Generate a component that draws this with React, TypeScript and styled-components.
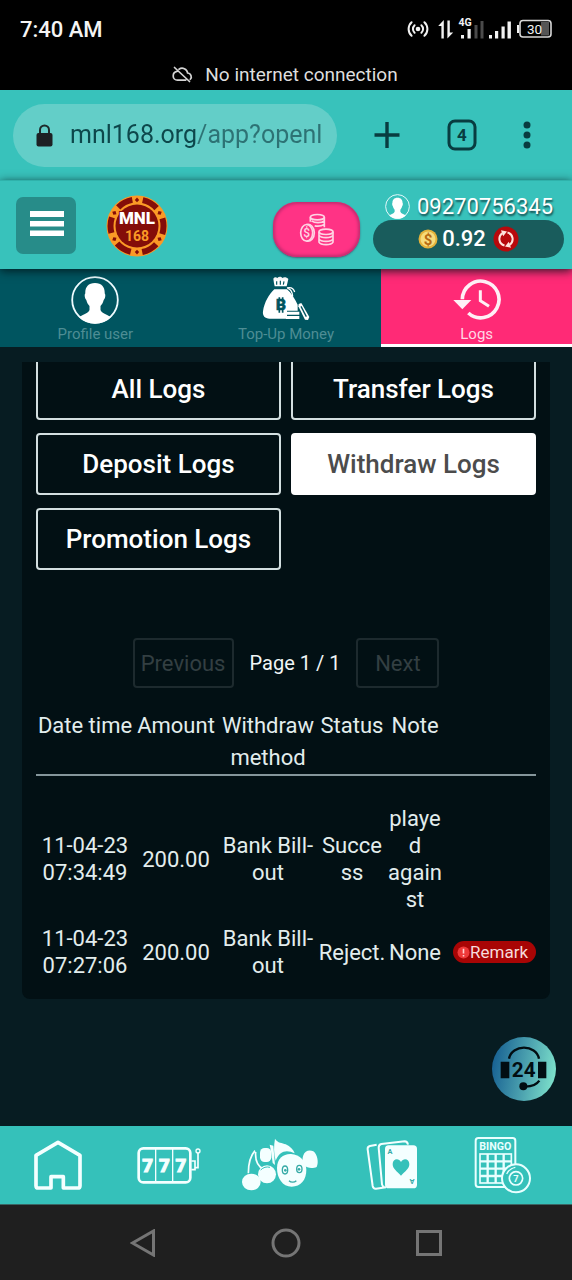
import React from "react";
import styled, { createGlobalStyle } from "styled-components";

const GlobalStyle = createGlobalStyle`
  *, *::before, *::after { box-sizing: border-box; }
  body { margin: 0; background: #071c22; font-family: Roboto, "Noto Sans", sans-serif; }
  button, input, table { font-family: inherit; }
  svg { display: block; flex: none; }
`;

const Page = styled.div`
  display: flex;
  flex-direction: column;
  min-height: 100vh;
`;

/* ---------- phone status area ---------- */
const StatusArea = styled.div`
  background: #000;
  color: #f4f4f4;
`;
const StatusBar = styled.div`
  display: flex;
  justify-content: space-between;
  align-items: center;
  height: 58px;
  padding: 0 20px;
  font-size: 22px;
  font-weight: 500;
`;
const OfflineNotice = styled.div`
  display: flex;
  justify-content: center;
  align-items: center;
  gap: 12px;
  height: 32px;
  padding-right: 2px;
  color: #dedede;
  font-size: 19px;
`;

/* ---------- browser bar ---------- */
const BrowserBar = styled.div`
  display: flex;
  align-items: center;
  height: 90px;
  padding: 0 41px 0 13px;
  background: #38c2bb;
`;
const AddressBox = styled.label`
  display: flex;
  align-items: center;
  gap: 17px;
  flex: 1;
  min-width: 0;
  height: 63px;
  padding: 0 10px 0 23px;
  border-radius: 32px;
  background: #63cec8;
`;
const AddressInput = styled.input`
  flex: 1;
  min-width: 0;
  padding: 0;
  border: 0;
  outline: 0;
  font-size: 25px;
  line-height: 36px;
  color: #0d474b;
  background: linear-gradient(to right, #0d474b 127px, #2d7274 127px);
  background-clip: text;
  -webkit-text-fill-color: transparent;
`;
const BrowserActions = styled.div`
  display: flex;
  align-items: center;
  justify-content: space-between;
  width: 157px;
  margin-left: 37px;
`;
const IconButton = styled.button`
  display: flex;
  padding: 0;
  border: 0;
  background: none;
  color: #083c40;
`;

/* ---------- site header ---------- */
const Header = styled.header`
  position: relative;
  z-index: 1;
  display: flex;
  align-items: center;
  height: 89px;
  padding: 13px 8px 12px 16px;
  background: #38c2bb;
  border-top: 1px solid #2fb2ab;
  box-shadow: 0 2px 9px rgba(0, 20, 24, 0.85);
`;
const MenuButton = styled.button`
  display: flex;
  align-items: center;
  justify-content: center;
  width: 60px;
  height: 57px;
  padding: 0 0 4px 2px;
  border: 0;
  border-radius: 7px;
  background: #278c89;
`;
const LogoLink = styled.a`
  margin-left: 30px;
  margin-right: auto;
`;
const CoinsButton = styled.button`
  display: flex;
  align-items: center;
  justify-content: center;
  align-self: flex-end;
  width: 87px;
  height: 55px;
  padding: 0;
  border: 0;
  border-radius: 24px;
  background: #ff3385;
  box-shadow: inset 0 0 3px 2px #c52c70, 0 1px 2px rgba(80, 30, 70, 0.6);
`;
const Account = styled.div`
  width: 191px;
  margin-left: 13px;
`;
const PhoneRow = styled.div`
  display: flex;
  align-items: center;
  gap: 7px;
  height: 26px;
  padding-left: 12px;
  color: #fff;
  font-size: 22px;
  text-shadow: 1px 2px 2px #134e50;
`;
const Balance = styled.div`
  display: flex;
  align-items: center;
  justify-content: center;
  gap: 4px;
  height: 38px;
  border-radius: 19px;
  background: #195c5c;
  color: #fff;
  font-size: 22px;
  font-weight: 500;
`;
const RefreshButton = styled.button`
  display: flex;
  margin-left: 3px;
  padding: 0;
  border: 0;
  border-radius: 50%;
  background: none;
`;

/* ---------- tabs ---------- */
const Tabs = styled.nav`
  display: grid;
  grid-template-columns: repeat(3, 1fr);
  height: 78px;
`;
const Tab = styled.a<{ $active?: boolean }>`
  display: flex;
  flex-direction: column;
  align-items: center;
  padding-top: 7px;
  border-bottom: 3px solid ${(p) => (p.$active ? "#fff" : "#005560")};
  background: ${(p) => (p.$active ? "#ff2a76" : "#005560")};
  color: ${(p) => (p.$active ? "#ffd7e5" : "#4e8d94")};
  font-size: 15px;
  line-height: 18px;
  text-decoration: none;
  svg { margin-bottom: 1px; }
`;

/* ---------- logs ---------- */
const Main = styled.main`
  position: relative;
  flex: 1;
  padding: 15px 22px 127px;
  background: #071c22;
`;
const Panel = styled.section`
  overflow: hidden;
  padding: 0 14px 20px;
  border-radius: 0 0 8px 8px;
  background: #021014;
`;
const FilterGrid = styled.div`
  display: grid;
  grid-template-columns: 1fr 1fr;
  gap: 13px 10px;
  margin-top: -4px;
`;
const FilterButton = styled.button<{ $active?: boolean }>`
  height: 62px;
  padding: 0;
  border: 2px solid ${(p) => (p.$active ? "#fff" : "#d3dfe0")};
  border-radius: 4px;
  background: ${(p) => (p.$active ? "#fff" : "transparent")};
  color: ${(p) => (p.$active ? "#4c4c4c" : "#fff")};
  font-size: 26px;
  font-weight: 500;
`;
const Pager = styled.div`
  display: flex;
  justify-content: center;
  align-items: center;
  gap: 16px;
  margin-top: 68px;
  color: #f1f6f6;
  font-size: 20px;
`;
const PagerButton = styled.button<{ $width: number }>`
  width: ${(p) => p.$width}px;
  height: 50px;
  padding: 0;
  border: 2px solid #1d2a2e;
  border-radius: 4px;
  background: transparent;
  color: #333f42;
  font-size: 22px;
`;
const LogTable = styled.table`
  width: 100%;
  margin-top: 22px;
  table-layout: fixed;
  border-collapse: collapse;
  color: #e2eded;
  font-size: 22px;
  text-align: center;
`;
const HeadCell = styled.th`
  height: 64px;
  padding: 0;
  border-bottom: 2px solid #85969b;
  font-weight: 400;
  line-height: 32px;
  vertical-align: top;
`;
const Cell = styled.td<{ $first?: boolean }>`
  padding: ${(p) => (p.$first ? "29px" : "12px")} 0 0;
  line-height: 27px;
  overflow-wrap: anywhere;
`;
const RemarkButton = styled.button`
  display: flex;
  align-items: center;
  justify-content: center;
  width: 83px;
  height: 22px;
  margin-left: auto;
  padding: 0 4px 0 0;
  border: 0;
  border-radius: 11px;
  background: #a80505;
  color: #f6dcdc;
  font-size: 17px;
`;
const SupportButton = styled.button`
  position: absolute;
  right: 16px;
  bottom: 25px;
  padding: 0;
  border: 0;
  border-radius: 50%;
  background: linear-gradient(100deg, #1a6494 8%, #4fa6b1 55%, #7fe3cc 95%);
`;

/* ---------- bottom bars ---------- */
const GameNav = styled.nav`
  display: grid;
  grid-template-columns: repeat(5, 1fr);
  height: 78px;
  padding: 0 13px 0 2px;
  background: #35c1ba;
`;
const GameLink = styled.a`
  display: flex;
  align-items: center;
  justify-content: center;
`;
const SystemNav = styled.div`
  display: grid;
  grid-template-columns: repeat(3, 1fr);
  height: 76px;
  padding: 0 12.5%;
  border-top: 1px solid #3a6664;
  background: #1f1f1f;
`;
const SystemButton = styled.button`
  display: flex;
  align-items: center;
  justify-content: center;
  padding: 0;
  border: 0;
  background: none;
`;

/* ---------- drawings ---------- */
const StatusIcons = () => (
  <svg width="146" height="30" viewBox="406 14 146 30" fill="#f2f2f2" aria-hidden="true">
    <circle cx="418" cy="29" r="2.3" />
    <g fill="none" stroke="#f2f2f2" strokeWidth="2" strokeLinecap="round">
      <path d="M414.6 25.2a5.2 5.2 0 0 0 0 7.6M421.4 25.2a5.2 5.2 0 0 1 0 7.6M411.6 22.2a9.2 9.2 0 0 0 0 13.6M424.4 22.2a9.2 9.2 0 0 1 0 13.6" />
    </g>
    <path d="M441.400 38.500V26h-3.200l5.600-6v18.500zM447.400 20.500h2.400V32.500h3.400l-5.800 6z" />
    <text x="458.500" y="25.500" fontSize="10.500" fontWeight="700">4G</text>
    <path d="M461 35h3v3.500h-3zM467.500 29h3.200v9.500h-3.200zM489 35h3v3.500h-3zM495 31h3.200v7.500H495zM501.500 26.500h3.200v12h-3.200zM507.500 21.500h3.400v17h-3.400z" />
    <path d="M474.500 25h3v13.500h-3zM480.500 21h3v17.500h-3z" fill="#4a4a4a" />
    <rect x="541" y="22" width="8" height="13.500" fill="#555" />
    <rect x="520" y="20.500" width="31" height="16.500" rx="3" fill="none" stroke="#d8d8d8" strokeWidth="1.600" />
    <path d="M517 25h2v8h-2z" />
    <text x="527" y="33.500" fontSize="13.500" fontWeight="400">30</text>
  </svg>
);
const CloudOff = () => (
  <svg width="21" height="17" viewBox="0 0 21 17" fill="none" stroke="#d4d4d4" strokeWidth="1.700" strokeLinecap="round" aria-hidden="true">
    <path d="M7 3.200A5.500 5.500 0 0 1 15.600 7a3.800 3.800 0 0 1 2.700 6.300M4.900 5.400C2.600 5.900 1.200 7.600 1.200 9.900a4.200 4.200 0 0 0 4.200 4.200h8.300M2.500 1.500l15 14" />
  </svg>
);
const Lock = () => (
  <svg width="17" height="23" viewBox="0 0 17 23" aria-hidden="true">
    <path d="M4 10V6a4.500 4.500 0 0 1 9 0v4" fill="none" stroke="#1d2a2b" strokeWidth="2" />
    <rect x="0.500" y="9" width="16" height="13.500" rx="2" fill="#1d2124" />
  </svg>
);
const Plus = () => (
  <svg width="26" height="28" viewBox="0 0 26 28" stroke="currentColor" strokeWidth="3.400" aria-hidden="true">
    <path d="M13 1v26M0.500 14h25" />
  </svg>
);
const TabCount = () => (
  <svg width="30" height="32" viewBox="0 0 30 32" aria-hidden="true">
    <rect x="2" y="2" width="26" height="28" rx="6" fill="none" stroke="currentColor" strokeWidth="3" />
    <text x="15" y="22" fontSize="17" fontWeight="700" textAnchor="middle" fill="currentColor">4</text>
  </svg>
);
const Dots = () => (
  <svg width="8" height="28" viewBox="0 0 8 28" fill="currentColor" aria-hidden="true">
    <circle cx="4" cy="4" r="3.500" /><circle cx="4" cy="14" r="3.500" /><circle cx="4" cy="24" r="3.500" />
  </svg>
);
const MenuBars = () => (
  <svg width="34" height="26" viewBox="0 0 34 26" fill="#fff" aria-hidden="true">
    <path d="M0 0h34v6H0zM0 10h34v5.500H0zM0 19.500h34V25H0z" />
  </svg>
);
const ChipLogo = () => (
  <svg width="62" height="62" viewBox="0 0 62 62" aria-hidden="true">
    <circle cx="31" cy="31" r="30.500" fill="#fb9a26" />
    <circle cx="31" cy="31" r="26.500" fill="none" stroke="#840d09" strokeWidth="6" strokeDasharray="16 11.750" strokeDashoffset="-5.870" transform="rotate(-90 31 31)" />
    {[0, 60, 120, 180, 240, 300].map((a) => (
      <path key={a} d="M31 2.500l2.200 2.400-2.200 2.400-2.200-2.400z" fill="#840d09" transform={`rotate(${a} 31 31)`} />
    ))}
    <circle cx="31" cy="31" r="21.500" fill="#840d09" />
    <text x="31" y="29" fontSize="17" fontWeight="900" textAnchor="middle" fill="#fff" stroke="#840d09" strokeWidth="2" paintOrder="stroke">MNL</text>
    <text x="31" y="46" fontSize="14" fontWeight="700" textAnchor="middle" fill="#fb9a26">168</text>
  </svg>
);
const Coins = () => (
  <svg width="36" height="34" viewBox="89 100 108 99" fill="none" stroke="#ffd3e3" strokeWidth="5" aria-hidden="true">
    <ellipse cx="144" cy="111" rx="21" ry="8" />
    <path d="M123 111v14M165 111v30M127 122c9 7 29 7 38 0M136 137c9 2 20 1 29-4" />
    <ellipse cx="112" cy="158" rx="18" ry="25" />
    <path d="M112 133c12-3 23 9 23 25s-10 27-23 25" />
    <text x="112" y="171" fontSize="36" fontWeight="500" textAnchor="middle" fill="#ffd3e3" stroke="none">$</text>
    <ellipse cx="170" cy="155" rx="21" ry="8" />
    <path d="M149 155v31c5 10 37 10 42 0v-31M149 165c5 10 37 10 42 0M149 176c5 10 37 10 42 0" />
  </svg>
);
const Avatar = ({ size }: { size: number }) => (
  <svg width={size} height={size} viewBox="0 0 48 48" aria-hidden="true">
    <circle cx="24" cy="24" r="22.800" fill="none" stroke="#eefcff" strokeWidth="1.800" />
    <path d="M24 7c-7 0-10 4.500-9.700 10.500-1 .6-.8 4.500 1 6.500.6 2.700 1.800 4.500 3.200 6v4c-1.500 3.500-6 4.300-10.500 7.200A23 23 0 0 0 40 41.200c-4.500-2.900-9-3.700-10.500-7.200v-4c1.400-1.500 2.600-3.300 3.200-6 1.800-2 2-5.900 1-6.500C34 11.500 31 7 24 7z" fill="#fff" />
  </svg>
);
const GoldCoin = () => (
  <svg width="20" height="20" viewBox="0 0 20 20" aria-hidden="true">
    <circle cx="10" cy="10" r="9.500" fill="#e3b23b" />
    <circle cx="10" cy="10" r="7.500" fill="#f5dc7c" />
    <text x="10" y="15.500" fontSize="15" fontWeight="700" textAnchor="middle" fill="#b76a12">$</text>
  </svg>
);
const Refresh = () => (
  <svg width="26" height="26" viewBox="0 0 26 26" aria-hidden="true">
    <circle cx="13" cy="13" r="12.500" fill="#b8090c" />
    <g fill="none" stroke="#ffe3dc" strokeWidth="2">
      <path d="M11.500 19.500A6.800 6.800 0 0 1 9.500 7.200M14.500 6.500a6.800 6.800 0 0 1 2 12.300" />
    </g>
    <path d="M8 4.300l6 1.200-3.800 4.700zM18 21.700l-6-1.200 3.800-4.700z" fill="#ffe3dc" />
  </svg>
);
const MoneyBag = () => (
  <svg width="48" height="48" viewBox="78 12 144 144" fill="#fff" aria-hidden="true">
    <path d="M112 20c4-6 9-5 12-2 4-5 12-5 15 0 5-4 14-2 18 3l-5 22h-36c-2-8-3-15-4-23z" />
    <path d="M115 52h38c14 12 24 30 32 46v18h-32v24h-52c-14 0-22-8-20-22 4-28 18-50 34-66z" />
    <path d="M153 48c12-3 20 2 23 12M156 49c10 4 13 10 14 24" fill="none" stroke="#fff" strokeWidth="4" />
    <path d="M150 119h40v9h-40zM150 132h40v9h-40z" />
    <path d="M188 96l8-3 24 42-4 9-9-1-20-40z" />
    <path d="M195 103l16 31" stroke="#005560" strokeWidth="4" />
    <path d="M122 28v10M133 26v12M144 28l-2 10" stroke="#005560" strokeWidth="3.500" />
    <text x="135" y="114" fontSize="46" fontWeight="900" textAnchor="middle" fill="#005560" stroke="#005560" strokeWidth="2">B</text>
    <path d="M130 83v-7M140 83v-7M130 122v-9M140 122v-9" stroke="#005560" strokeWidth="5" />
  </svg>
);
const History = () => (
  <svg width="48" height="48" viewBox="548 286 144 144" aria-hidden="true">
    <path d="M576 356a55 55 0 1 1 18 41" fill="none" stroke="#fff0f6" strokeWidth="11" />
    <path d="M549 358h54l-27 28z" fill="#fff0f6" />
    <path d="M630 329v31l26 17" fill="none" stroke="#fff0f6" strokeWidth="9" />
  </svg>
);
const Alert = () => (
  <svg width="13" height="13" viewBox="0 0 13 13" aria-hidden="true">
    <circle cx="6.500" cy="6.500" r="6" fill="#ee3a3a" />
    <path d="M6.500 2.800v4.700M6.500 9v1.500" stroke="#ffd0d0" strokeWidth="1.600" />
  </svg>
);
const Headset24 = () => (
  <svg width="64" height="64" viewBox="637 51 192 192" aria-hidden="true">
    <path d="M688 116c8-44 82-44 90 0M779 182c-8 12-20 17-42 18" fill="none" stroke="#020d12" strokeWidth="7" />
    <path d="M663 125h26v50h-26zM775 125h25v50h-25z" fill="#020d12" />
    <circle cx="731" cy="199" r="12" fill="#020d12" />
    <text x="732" y="170" fontSize="62" fontWeight="700" textAnchor="middle" fill="#020d12">24</text>
  </svg>
);
const House = () => (
  <svg width="50" height="52" viewBox="99 56 150 156" aria-hidden="true">
    <path d="M174 66l66 39v91q0 7-7 7h-43v-34h-37v34h-38q-7 0-7-7v-91z" fill="none" stroke="#f4ffff" strokeWidth="11" strokeLinejoin="round" />
  </svg>
);
const Slots = () => (
  <svg width="64" height="38" viewBox="411 76 192 114" fill="none" stroke="#f4ffff" aria-hidden="true">
    <rect x="416" y="83" width="155" height="102" rx="14" strokeWidth="8" />
    <path d="M467 84v100M518 84v100" strokeWidth="4" />
    <path d="M574 121h11v26h-11M594 97v44h-8" strokeWidth="5" />
    <circle cx="594" cy="91" r="6" strokeWidth="4" />
    <g fill="#f4ffff" strokeWidth="3" fontSize="56" fontWeight="900" textAnchor="middle">
      <text x="443" y="155">7</text><text x="493" y="155">7</text><text x="543" y="155">7</text>
    </g>
  </svg>
);
const FishFruit = () => (
  <svg width="78" height="54" viewBox="34 22 234 162" fill="#f4ffff" aria-hidden="true">
    <path d="M56 128c0-30 4-50 20-68M78 64c-2 26 8 44 24 52" fill="none" stroke="#f4ffff" strokeWidth="5" />
    <ellipse cx="65" cy="154" rx="28" ry="25" />
    <circle cx="112" cy="131" r="27" />
    <path d="M93 118c8-8 17-11 28-8" fill="none" stroke="#35c1ba" strokeWidth="3" />
    <rect x="91" y="52" width="34" height="42" rx="14" />
    <path d="M120 42l11 3 5 58-7-6-5-36z" />
    <path d="M136 24c8 14 22 12 32 17 14 7 23 16 27 27-24-12-45-8-57 22-6-22-6-44-2-66z" />
    <path d="M142 112c0-28 19-43 42-42 27 2 46 22 46 48 0 30-17 50-44 50-28 0-44-26-44-56z" />
    <path d="M221 74c4-14 18-17 30-12 12 8 17 34 10 47-10 5-29 5-37-5-6-8-7-20-3-30z" />
    <g fill="none" stroke="#35aaa6" strokeWidth="4">
      <ellipse cx="166" cy="118" rx="8" ry="12" /><ellipse cx="209" cy="115" rx="8" ry="11" />
      <path d="M178 150c6 6 16 6 22 0" />
    </g>
    <circle cx="167" cy="119" r="4" fill="#35aaa6" /><circle cx="208" cy="116" r="4" fill="#35aaa6" />
  </svg>
);
const Cards = () => (
  <svg width="52" height="50" viewBox="258 367 156 150" aria-hidden="true">
    <g fill="none" stroke="#f4ffff" strokeWidth="6">
      <path d="M290 381l-20 4q-8 2-7 10l15 110q2 9 10 8l30-4" />
      <path d="M313 508q-6-2-7-8l-10-110q0-9 8-11l70-8q8 0 10 10" />
    </g>
    <rect x="315" y="383" width="96" height="129" rx="11" fill="#f4ffff" />
    <path d="M363 474c-13-14-25-21-25-35 0-16 18-20 25-6 7-14 25-10 25 6 0 14-12 21-25 35z" fill="#35c1ba" />
    <g fill="#35aaa6" fontSize="22" fontWeight="700" textAnchor="middle">
      <text x="330" y="408">A</text>
      <text x="396" y="500" transform="rotate(180 396 492)">A</text>
    </g>
  </svg>
);
const Bingo = () => (
  <svg width="58" height="58" viewBox="582 354 174 174" fill="none" stroke="#e9ffff" aria-hidden="true">
    <rect x="587" y="360" width="119" height="147" rx="8" strokeWidth="6" />
    <text x="646" y="396" fontSize="32" fontWeight="700" textAnchor="middle" fill="#e9ffff" stroke="none">BINGO</text>
    <rect x="600" y="408" width="94" height="87" strokeWidth="5" />
    <path d="M623 408v87M647 408v87M671 408v87M600 430h94M600 452h94M600 474h94" strokeWidth="7" />
    <circle cx="708" cy="481" r="42" fill="#35c1ba" strokeWidth="6" />
    <circle cx="708" cy="481" r="20" strokeWidth="5" />
    <path d="M680 468c6-12 14-18 26-20" strokeWidth="4" />
    <text x="708" y="492" fontSize="28" fontWeight="700" textAnchor="middle" fill="#e9ffff" stroke="none">7</text>
  </svg>
);

const filters = ["All Logs", "Transfer Logs", "Deposit Logs", "Withdraw Logs", "Promotion Logs"];
const headings = ["Date time", "Amount", "Withdraw method", "Status", "Note", ""];
const columnWidths = [98, 84, 100, 68, 58];
const logs = [
  { date: "11-04-23", time: "07:34:49", amount: "200.00", method: "Bank Bill-out", status: "Success", note: "played against", remark: false },
  { date: "11-04-23", time: "07:27:06", amount: "200.00", method: "Bank Bill-out", status: "Reject.", note: "None", remark: true },
];
const games = [
  { label: "Home", Icon: House },
  { label: "Slots", Icon: Slots },
  { label: "Fishing", Icon: FishFruit },
  { label: "Cards", Icon: Cards },
  { label: "Bingo", Icon: Bingo },
];

export default function App() {
  return (
    <Page>
      <GlobalStyle />
      <StatusArea>
        <StatusBar>
          <span>7:40 AM</span>
          <StatusIcons />
        </StatusBar>
        <OfflineNotice>
          <CloudOff />
          <span>No internet connection</span>
        </OfflineNotice>
      </StatusArea>

      <BrowserBar>
        <AddressBox>
          <Lock />
          <AddressInput type="text" aria-label="Address" defaultValue="mnl168.org/app?openl" />
        </AddressBox>
        <BrowserActions>
          <IconButton aria-label="New tab"><Plus /></IconButton>
          <IconButton aria-label="Open tabs"><TabCount /></IconButton>
          <IconButton aria-label="More"><Dots /></IconButton>
        </BrowserActions>
      </BrowserBar>

      <Header>
        <MenuButton aria-label="Menu"><MenuBars /></MenuButton>
        <LogoLink href="#" aria-label="MNL168"><ChipLogo /></LogoLink>
        <CoinsButton aria-label="Top up"><Coins /></CoinsButton>
        <Account>
          <PhoneRow>
            <Avatar size={25} />
            <span>09270756345</span>
          </PhoneRow>
          <Balance>
            <GoldCoin />
            <span>0.92</span>
            <RefreshButton aria-label="Refresh balance"><Refresh /></RefreshButton>
          </Balance>
        </Account>
      </Header>

      <Tabs>
        <Tab href="#profile"><Avatar size={48} />Profile user</Tab>
        <Tab href="#topup"><MoneyBag />Top-Up Money</Tab>
        <Tab href="#logs" $active><History />Logs</Tab>
      </Tabs>

      <Main>
        <Panel>
          <FilterGrid>
            {filters.map((name) => (
              <FilterButton key={name} $active={name === "Withdraw Logs"}>{name}</FilterButton>
            ))}
          </FilterGrid>
          <Pager>
            <PagerButton $width={101} disabled>Previous</PagerButton>
            <span>Page 1 / 1</span>
            <PagerButton $width={83} disabled>Next</PagerButton>
          </Pager>
          <LogTable>
            <colgroup>
              {columnWidths.map((w, i) => <col key={i} width={w} />)}
              <col />
            </colgroup>
            <thead>
              <tr>{headings.map((h) => <HeadCell key={h}>{h}</HeadCell>)}</tr>
            </thead>
            <tbody>
              {logs.map((log, i) => (
                <tr key={log.time}>
                  <Cell $first={i === 0}>{log.date} {log.time}</Cell>
                  <Cell $first={i === 0}>{log.amount}</Cell>
                  <Cell $first={i === 0}>{log.method}</Cell>
                  <Cell $first={i === 0}>{log.status}</Cell>
                  <Cell $first={i === 0}>{log.note}</Cell>
                  <Cell $first={i === 0}>
                    {log.remark && <RemarkButton><Alert />Remark</RemarkButton>}
                  </Cell>
                </tr>
              ))}
            </tbody>
          </LogTable>
        </Panel>
        <SupportButton aria-label="24 hour support"><Headset24 /></SupportButton>
      </Main>

      <GameNav>
        {games.map(({ label, Icon }) => (
          <GameLink key={label} href="#" aria-label={label}><Icon /></GameLink>
        ))}
      </GameNav>

      <SystemNav>
        <SystemButton aria-label="Back">
          <svg width="26" height="28" viewBox="0 0 26 28"><path d="M23.500 2v24L2.500 14z" fill="none" stroke="#757575" strokeWidth="3" /></svg>
        </SystemButton>
        <SystemButton aria-label="Home">
          <svg width="30" height="30" viewBox="0 0 30 30"><circle cx="15" cy="15" r="13" fill="none" stroke="#757575" strokeWidth="3" /></svg>
        </SystemButton>
        <SystemButton aria-label="Recent apps">
          <svg width="26" height="26" viewBox="0 0 26 26"><path d="M1.500 1.500h23v23h-23z" fill="none" stroke="#757575" strokeWidth="3" /></svg>
        </SystemButton>
      </SystemNav>
    </Page>
  );
}
